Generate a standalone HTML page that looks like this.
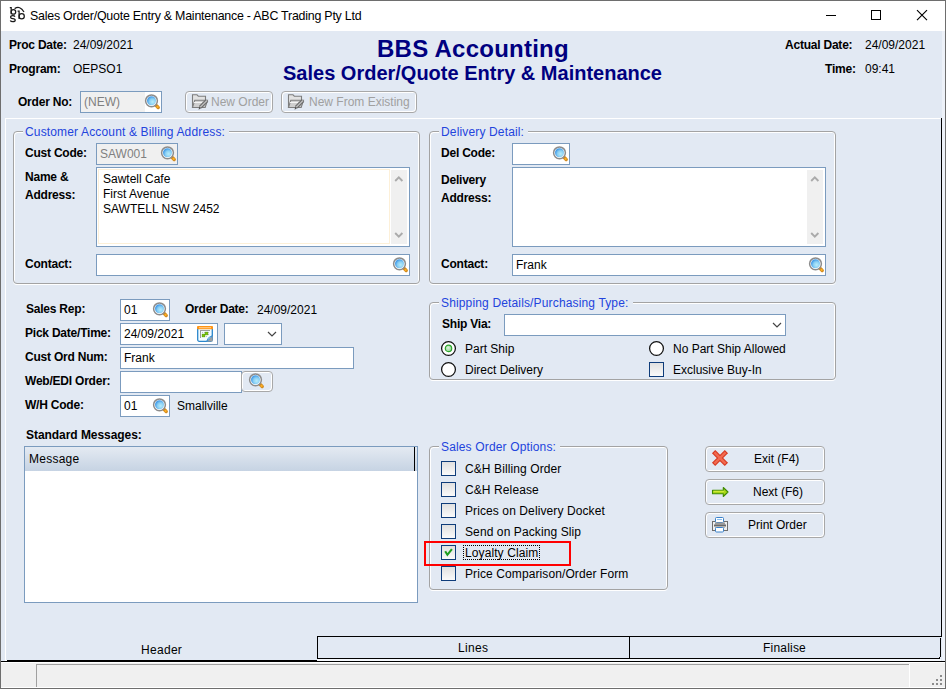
<!DOCTYPE html>
<html><head><meta charset="utf-8"><style>
html,body{margin:0;padding:0;width:946px;height:689px;overflow:hidden;background:#fff}
body{position:relative;font-family:"Liberation Sans",sans-serif;}
body>div{position:absolute}
.t{white-space:nowrap}
svg{overflow:visible}
</style></head><body>
<div style="left:0;top:0;width:946px;height:689px;background:#fff"></div>
<div class="t" style="left:30px;top:9px;font-size:12px;line-height:14px;font-weight:normal;color:#000;font-size:12.4px;letter-spacing:-0.22px">Sales Order/Quote Entry &amp; Maintenance - ABC Trading Pty Ltd</div>
<div style="left:1px;top:31px;width:944px;height:632px;background:#E2E9F3"></div>
<div style="left:826px;top:15px;width:10px;height:1px;background:#000"></div>
<div style="left:871px;top:10px;width:10px;height:10px;box-sizing:border-box;border:1px solid #000"></div>
<svg style="position:absolute;left:916px;top:9px" width="13" height="13" viewBox="0 0 13 13"><path d="M1 1.2 L11 11.2 M11 1.2 L1 11.2" stroke="#000" stroke-width="1.15"/></svg>
<div style="left:0px;top:0px;width:946px;height:1px;background:#6E6E6E"></div>
<div style="left:0px;top:0px;width:1px;height:689px;background:#6E6E6E"></div>
<div style="left:945px;top:0px;width:1px;height:689px;background:#6E6E6E"></div>
<div style="left:0px;top:688px;width:946px;height:1px;background:#6E6E6E"></div>
<div class="t" style="left:9px;top:38px;font-size:12px;line-height:14px;font-weight:bold;color:#000;letter-spacing:-0.22px;">Proc Date:</div>
<div class="t" style="left:73px;top:38px;font-size:12px;line-height:14px;font-weight:normal;color:#000;">24/09/2021</div>
<div class="t" style="left:9px;top:62px;font-size:12px;line-height:14px;font-weight:bold;color:#000;letter-spacing:-0.22px;">Program:</div>
<div class="t" style="left:73px;top:62px;font-size:12px;line-height:14px;font-weight:normal;color:#000;">OEPSO1</div>
<div class="t" style="left:377px;top:35px;font-size:24px;line-height:28px;font-weight:bold;color:#000080;letter-spacing:0.25px">BBS Accounting</div>
<div class="t" style="left:283px;top:61px;font-size:20px;line-height:24px;font-weight:bold;color:#000080;">Sales Order/Quote Entry &amp; Maintenance</div>
<div class="t" style="left:785px;top:38px;font-size:12px;line-height:14px;font-weight:bold;color:#000;letter-spacing:-0.22px;">Actual Date:</div>
<div class="t" style="left:865px;top:38px;font-size:12px;line-height:14px;font-weight:normal;color:#000;">24/09/2021</div>
<div class="t" style="left:825px;top:62px;font-size:12px;line-height:14px;font-weight:bold;color:#000;letter-spacing:-0.22px;">Time:</div>
<div class="t" style="left:865px;top:62px;font-size:12px;line-height:14px;font-weight:normal;color:#000;">09:41</div>
<div class="t" style="left:18px;top:95px;font-size:12px;line-height:14px;font-weight:bold;color:#000;letter-spacing:-0.22px;">Order No:</div>
<div style="left:80px;top:91px;width:82px;height:22px;box-sizing:border-box;border:1px solid #7B9BBE;background:#F0F0F0"></div>
<div style="left:145px;top:92px;width:16px;height:20px;background:#fff"></div>
<div class="t" style="left:84px;top:95px;font-size:12px;line-height:14px;font-weight:normal;color:#808080;">(NEW)</div>
<svg style="position:absolute;left:144px;top:93px" width="17" height="17" viewBox="0 0 17 17">
<defs><radialGradient id="mg144_93" cx="0.62" cy="0.62" r="0.62"><stop offset="0" stop-color="#B8ECFA"/><stop offset="0.55" stop-color="#8AD0F4"/><stop offset="1" stop-color="#3F98E6"/></radialGradient></defs>
<path d="M11.6 11.9 L14.2 14.5" stroke="#D08A20" stroke-width="3.4" stroke-linecap="round"/>
<circle cx="13.6" cy="13.9" r="1.1" fill="#FFB020"/>
<circle cx="7.5" cy="7.8" r="5.9" fill="#fff" stroke="#8C8C8C" stroke-width="1.5"/>
<circle cx="7.5" cy="7.8" r="4.5" fill="url(#mg144_93)"/>
</svg>
<div style="left:185px;top:91px;width:88px;height:22px;box-sizing:border-box;border:1px solid #A8A8A8;border-radius:4px;box-shadow:inset 1px 1px 0 #fff,inset -1px -1px 0 #fff;background:#E2E9F3"></div>
<svg style="position:absolute;left:192px;top:94px" width="17" height="17" viewBox="0 0 17 17">
<path d="M0.5 13.5 V0.8 H5 L6.3 2.2 H13.5 V6" fill="#E2E2E2" stroke="#7E7E7E" stroke-width="1.1"/>
<path d="M0.5 13.5 L2.8 6.2 H15.5 L13.2 13.5 Z" fill="#CFCFCF" stroke="#7E7E7E" stroke-width="1.1"/>
<path d="M2 8.5 H10" stroke="#F4F4F4" stroke-width="1"/>
<path d="M15 6.5 L8.2 13.3" stroke="#6A6A6A" stroke-width="3.6"/>
<path d="M15 6.5 L8.2 13.3" stroke="#BDBDBD" stroke-width="1.4"/>
<path d="M7.2 12.5 L9 14.3 L6.6 15.8 Z" fill="#555"/>
</svg>
<div class="t" style="left:211px;top:95px;font-size:12px;line-height:14px;font-weight:normal;color:#A0A0A0;">New Order</div>
<div style="left:281px;top:91px;width:136px;height:22px;box-sizing:border-box;border:1px solid #A8A8A8;border-radius:4px;box-shadow:inset 1px 1px 0 #fff,inset -1px -1px 0 #fff;background:#E2E9F3"></div>
<svg style="position:absolute;left:288px;top:94px" width="17" height="17" viewBox="0 0 17 17">
<path d="M0.5 13.5 V0.8 H5 L6.3 2.2 H13.5 V6" fill="#E2E2E2" stroke="#7E7E7E" stroke-width="1.1"/>
<path d="M0.5 13.5 L2.8 6.2 H15.5 L13.2 13.5 Z" fill="#CFCFCF" stroke="#7E7E7E" stroke-width="1.1"/>
<path d="M2 8.5 H10" stroke="#F4F4F4" stroke-width="1"/>
<path d="M15 6.5 L8.2 13.3" stroke="#6A6A6A" stroke-width="3.6"/>
<path d="M15 6.5 L8.2 13.3" stroke="#BDBDBD" stroke-width="1.4"/>
<path d="M7.2 12.5 L9 14.3 L6.6 15.8 Z" fill="#555"/>
</svg>
<div class="t" style="left:309px;top:95px;font-size:12px;line-height:14px;font-weight:normal;color:#A0A0A0;">New From Existing</div>
<div style="left:5px;top:118px;width:936px;height:1px;background:#fff"></div>
<div style="left:5px;top:118px;width:1px;height:542px;background:#fff"></div>
<div style="left:941px;top:118px;width:1px;height:519px;background:#000"></div>
<div style="left:942px;top:31px;width:3px;height:630px;background:#EDF1F8"></div>
<div style="left:13px;top:131px;width:407px;height:153px;box-sizing:border-box;border:1px solid #A3A3A3;border-radius:4px;box-shadow:inset 1px 1px 0 #fff, inset -1px 0 0 #fff, 0 1px 0 #fff"></div>
<div class="t" style="left:23px;top:125px;padding:0 4px 0 2px;font-size:12px;line-height:14px;height:14px;color:#2244DD;background:#E2E9F3;letter-spacing:0.15px">Customer Account &amp; Billing Address:</div>
<div class="t" style="left:25px;top:146px;font-size:12px;line-height:14px;font-weight:bold;color:#000;letter-spacing:-0.22px;">Cust Code:</div>
<div style="left:96px;top:143px;width:82px;height:22px;box-sizing:border-box;border:1px solid #7B9BBE;background:#F0F0F0"></div>
<div class="t" style="left:100px;top:147px;font-size:12px;line-height:14px;font-weight:normal;color:#808080;">SAW001</div>
<svg style="position:absolute;left:160px;top:145px" width="17" height="17" viewBox="0 0 17 17">
<defs><radialGradient id="mg160_145" cx="0.62" cy="0.62" r="0.62"><stop offset="0" stop-color="#B8ECFA"/><stop offset="0.55" stop-color="#8AD0F4"/><stop offset="1" stop-color="#3F98E6"/></radialGradient></defs>
<path d="M11.6 11.9 L14.2 14.5" stroke="#D08A20" stroke-width="3.4" stroke-linecap="round"/>
<circle cx="13.6" cy="13.9" r="1.1" fill="#FFB020"/>
<circle cx="7.5" cy="7.8" r="5.9" fill="#fff" stroke="#8C8C8C" stroke-width="1.5"/>
<circle cx="7.5" cy="7.8" r="4.5" fill="url(#mg160_145)"/>
</svg>
<div class="t" style="left:25px;top:170px;font-size:12px;line-height:14px;font-weight:bold;color:#000;letter-spacing:-0.22px;">Name &amp;</div>
<div class="t" style="left:25px;top:188px;font-size:12px;line-height:14px;font-weight:bold;color:#000;letter-spacing:-0.22px;">Address:</div>
<div style="left:96px;top:167px;width:314px;height:80px;box-sizing:border-box;border:1px solid #7B9BBE;background:#FFFFFF"></div>
<div style="left:98px;top:169px;width:292px;height:75px;box-sizing:border-box;border:1px solid #FDF0D8"></div>
<div style="left:391px;top:170px;width:16px;height:74px;background:#F0F0F0"></div>
<svg style="position:absolute;left:391px;top:170px" width="16" height="74" viewBox="0 0 16 74"><path d="M4.2 11 L7.8 7.3 L11.4 11" fill="none" stroke="#ABABAB" stroke-width="1.9"/><path d="M4.2 63 L7.8 66.7 L11.4 63" fill="none" stroke="#ABABAB" stroke-width="1.9"/></svg>
<div class="t" style="left:103px;top:172px;font-size:12px;line-height:14px;font-weight:normal;color:#000;">Sawtell Cafe</div>
<div class="t" style="left:103px;top:187px;font-size:12px;line-height:14px;font-weight:normal;color:#000;">First Avenue</div>
<div class="t" style="left:103px;top:202px;font-size:12px;line-height:14px;font-weight:normal;color:#000;">SAWTELL NSW 2452</div>
<div class="t" style="left:25px;top:257px;font-size:12px;line-height:14px;font-weight:bold;color:#000;letter-spacing:-0.22px;">Contact:</div>
<div style="left:96px;top:254px;width:314px;height:22px;box-sizing:border-box;border:1px solid #7B9BBE;background:#FFFFFF"></div>
<svg style="position:absolute;left:392px;top:256px" width="17" height="17" viewBox="0 0 17 17">
<defs><radialGradient id="mg392_256" cx="0.62" cy="0.62" r="0.62"><stop offset="0" stop-color="#B8ECFA"/><stop offset="0.55" stop-color="#8AD0F4"/><stop offset="1" stop-color="#3F98E6"/></radialGradient></defs>
<path d="M11.6 11.9 L14.2 14.5" stroke="#D08A20" stroke-width="3.4" stroke-linecap="round"/>
<circle cx="13.6" cy="13.9" r="1.1" fill="#FFB020"/>
<circle cx="7.5" cy="7.8" r="5.9" fill="#fff" stroke="#8C8C8C" stroke-width="1.5"/>
<circle cx="7.5" cy="7.8" r="4.5" fill="url(#mg392_256)"/>
</svg>
<div style="left:429px;top:131px;width:407px;height:153px;box-sizing:border-box;border:1px solid #A3A3A3;border-radius:4px;box-shadow:inset 1px 1px 0 #fff, inset -1px 0 0 #fff, 0 1px 0 #fff"></div>
<div class="t" style="left:439px;top:125px;padding:0 4px 0 2px;font-size:12px;line-height:14px;height:14px;color:#2244DD;background:#E2E9F3;letter-spacing:0.15px">Delivery Detail:</div>
<div class="t" style="left:441px;top:146px;font-size:12px;line-height:14px;font-weight:bold;color:#000;letter-spacing:-0.22px;">Del Code:</div>
<div style="left:512px;top:143px;width:58px;height:22px;box-sizing:border-box;border:1px solid #7B9BBE;background:#FFFFFF"></div>
<svg style="position:absolute;left:552px;top:145px" width="17" height="17" viewBox="0 0 17 17">
<defs><radialGradient id="mg552_145" cx="0.62" cy="0.62" r="0.62"><stop offset="0" stop-color="#B8ECFA"/><stop offset="0.55" stop-color="#8AD0F4"/><stop offset="1" stop-color="#3F98E6"/></radialGradient></defs>
<path d="M11.6 11.9 L14.2 14.5" stroke="#D08A20" stroke-width="3.4" stroke-linecap="round"/>
<circle cx="13.6" cy="13.9" r="1.1" fill="#FFB020"/>
<circle cx="7.5" cy="7.8" r="5.9" fill="#fff" stroke="#8C8C8C" stroke-width="1.5"/>
<circle cx="7.5" cy="7.8" r="4.5" fill="url(#mg552_145)"/>
</svg>
<div class="t" style="left:441px;top:173px;font-size:12px;line-height:14px;font-weight:bold;color:#000;letter-spacing:-0.22px;">Delivery</div>
<div class="t" style="left:441px;top:191px;font-size:12px;line-height:14px;font-weight:bold;color:#000;letter-spacing:-0.22px;">Address:</div>
<div style="left:512px;top:167px;width:314px;height:80px;box-sizing:border-box;border:1px solid #7B9BBE;background:#FFFFFF"></div>
<div style="left:807px;top:170px;width:16px;height:74px;background:#F0F0F0"></div>
<svg style="position:absolute;left:807px;top:170px" width="16" height="74" viewBox="0 0 16 74"><path d="M4.2 11 L7.8 7.3 L11.4 11" fill="none" stroke="#ABABAB" stroke-width="1.9"/><path d="M4.2 63 L7.8 66.7 L11.4 63" fill="none" stroke="#ABABAB" stroke-width="1.9"/></svg>
<div class="t" style="left:441px;top:257px;font-size:12px;line-height:14px;font-weight:bold;color:#000;letter-spacing:-0.22px;">Contact:</div>
<div style="left:512px;top:254px;width:314px;height:22px;box-sizing:border-box;border:1px solid #7B9BBE;background:#FFFFFF"></div>
<div class="t" style="left:516px;top:258px;font-size:12px;line-height:14px;font-weight:normal;color:#000;">Frank</div>
<svg style="position:absolute;left:808px;top:256px" width="17" height="17" viewBox="0 0 17 17">
<defs><radialGradient id="mg808_256" cx="0.62" cy="0.62" r="0.62"><stop offset="0" stop-color="#B8ECFA"/><stop offset="0.55" stop-color="#8AD0F4"/><stop offset="1" stop-color="#3F98E6"/></radialGradient></defs>
<path d="M11.6 11.9 L14.2 14.5" stroke="#D08A20" stroke-width="3.4" stroke-linecap="round"/>
<circle cx="13.6" cy="13.9" r="1.1" fill="#FFB020"/>
<circle cx="7.5" cy="7.8" r="5.9" fill="#fff" stroke="#8C8C8C" stroke-width="1.5"/>
<circle cx="7.5" cy="7.8" r="4.5" fill="url(#mg808_256)"/>
</svg>
<div class="t" style="left:26px;top:302px;font-size:12px;line-height:14px;font-weight:bold;color:#000;letter-spacing:-0.22px;">Sales Rep:</div>
<div style="left:120px;top:299px;width:50px;height:22px;box-sizing:border-box;border:1px solid #7B9BBE;background:#FFFFFF"></div>
<div class="t" style="left:124px;top:303px;font-size:12px;line-height:14px;font-weight:normal;color:#000;">01</div>
<svg style="position:absolute;left:152px;top:301px" width="17" height="17" viewBox="0 0 17 17">
<defs><radialGradient id="mg152_301" cx="0.62" cy="0.62" r="0.62"><stop offset="0" stop-color="#B8ECFA"/><stop offset="0.55" stop-color="#8AD0F4"/><stop offset="1" stop-color="#3F98E6"/></radialGradient></defs>
<path d="M11.6 11.9 L14.2 14.5" stroke="#D08A20" stroke-width="3.4" stroke-linecap="round"/>
<circle cx="13.6" cy="13.9" r="1.1" fill="#FFB020"/>
<circle cx="7.5" cy="7.8" r="5.9" fill="#fff" stroke="#8C8C8C" stroke-width="1.5"/>
<circle cx="7.5" cy="7.8" r="4.5" fill="url(#mg152_301)"/>
</svg>
<div class="t" style="left:185px;top:302px;font-size:12px;line-height:14px;font-weight:bold;color:#000;letter-spacing:-0.22px;">Order Date:</div>
<div class="t" style="left:257px;top:303px;font-size:12px;line-height:14px;font-weight:normal;color:#000;">24/09/2021</div>
<div class="t" style="left:25px;top:326px;font-size:12px;line-height:14px;font-weight:bold;color:#000;letter-spacing:-0.22px;">Pick Date/Time:</div>
<div style="left:120px;top:323px;width:98px;height:22px;box-sizing:border-box;border:1px solid #7B9BBE;background:#FFFFFF"></div>
<div class="t" style="left:124px;top:327px;font-size:12px;line-height:14px;font-weight:normal;color:#000;">24/09/2021</div>
<svg style="position:absolute;left:197px;top:326px" width="16" height="16" viewBox="0 0 16 16">
<rect x="0.7" y="1" width="14.6" height="14.3" rx="1.5" fill="#F4FCFF" stroke="#2A86CC" stroke-width="1.3"/>
<rect x="0" y="0" width="16" height="3.2" rx="1" fill="#FF9414"/>
<rect x="2" y="1.3" width="12" height="0.9" fill="#FFD9A8"/>
<rect x="3" y="4" width="10" height="1" fill="#9C9C9C"/>
<rect x="3" y="4" width="1" height="8" fill="#9C9C9C"/>
<g fill="#BDBDC8"><rect x="5" y="6" width="1" height="1"/><rect x="7" y="6" width="1" height="1"/><rect x="9" y="6" width="1" height="1"/><rect x="11" y="6" width="1" height="1"/><rect x="5" y="8" width="1" height="1"/><rect x="7" y="8" width="1" height="1"/><rect x="11" y="8" width="1" height="1"/><rect x="5" y="10" width="1" height="1"/><rect x="7" y="10" width="1" height="1"/><rect x="9" y="10" width="1" height="1"/></g>
<rect x="5.2" y="8.2" width="2.6" height="2.6" fill="#7CC800" stroke="#58A000" stroke-width="0.7"/>
<rect x="8.2" y="6.2" width="2.6" height="2.6" fill="#7CC800" stroke="#58A000" stroke-width="0.7"/>
<path d="M9.5 15.5 L15.5 9.5 V15.5 Z" fill="#A0A0A0"/>
<path d="M9.5 15.5 Q10.5 11 15.5 9.5 L13 12.5 Z" fill="#fff" stroke="#2A86CC" stroke-width="0.9"/>
</svg>
<div style="left:224px;top:323px;width:58px;height:22px;box-sizing:border-box;border:1px solid #7B9BBE;background:#FFFFFF"></div>
<svg style="position:absolute;left:267px;top:331px" width="10" height="7" viewBox="0 0 10 7"><path d="M1 1 L5 5 L9 1" fill="none" stroke="#444" stroke-width="1.2"/></svg>
<div class="t" style="left:25px;top:350px;font-size:12px;line-height:14px;font-weight:bold;color:#000;letter-spacing:-0.22px;">Cust Ord Num:</div>
<div style="left:120px;top:347px;width:234px;height:22px;box-sizing:border-box;border:1px solid #7B9BBE;background:#FFFFFF"></div>
<div class="t" style="left:124px;top:351px;font-size:12px;line-height:14px;font-weight:normal;color:#000;">Frank</div>
<div class="t" style="left:25px;top:374px;font-size:12px;line-height:14px;font-weight:bold;color:#000;letter-spacing:-0.22px;">Web/EDI Order:</div>
<div style="left:120px;top:371px;width:122px;height:22px;box-sizing:border-box;border:1px solid #7B9BBE;background:#FFFFFF"></div>
<div style="left:241px;top:371px;width:32px;height:21px;box-sizing:border-box;border:1px solid #A8A8A8;border-radius:4px;box-shadow:inset 1px 1px 0 #fff,inset -1px -1px 0 #fff;background:#E2E9F3"></div>
<svg style="position:absolute;left:248px;top:372px" width="17" height="17" viewBox="0 0 17 17">
<defs><radialGradient id="mg248_372" cx="0.62" cy="0.62" r="0.62"><stop offset="0" stop-color="#B8ECFA"/><stop offset="0.55" stop-color="#8AD0F4"/><stop offset="1" stop-color="#3F98E6"/></radialGradient></defs>
<path d="M11.6 11.9 L14.2 14.5" stroke="#D08A20" stroke-width="3.4" stroke-linecap="round"/>
<circle cx="13.6" cy="13.9" r="1.1" fill="#FFB020"/>
<circle cx="7.5" cy="7.8" r="5.9" fill="#fff" stroke="#8C8C8C" stroke-width="1.5"/>
<circle cx="7.5" cy="7.8" r="4.5" fill="url(#mg248_372)"/>
</svg>
<div class="t" style="left:25px;top:398px;font-size:12px;line-height:14px;font-weight:bold;color:#000;letter-spacing:-0.22px;">W/H Code:</div>
<div style="left:120px;top:395px;width:50px;height:22px;box-sizing:border-box;border:1px solid #7B9BBE;background:#FFFFFF"></div>
<div class="t" style="left:124px;top:399px;font-size:12px;line-height:14px;font-weight:normal;color:#000;">01</div>
<svg style="position:absolute;left:152px;top:397px" width="17" height="17" viewBox="0 0 17 17">
<defs><radialGradient id="mg152_397" cx="0.62" cy="0.62" r="0.62"><stop offset="0" stop-color="#B8ECFA"/><stop offset="0.55" stop-color="#8AD0F4"/><stop offset="1" stop-color="#3F98E6"/></radialGradient></defs>
<path d="M11.6 11.9 L14.2 14.5" stroke="#D08A20" stroke-width="3.4" stroke-linecap="round"/>
<circle cx="13.6" cy="13.9" r="1.1" fill="#FFB020"/>
<circle cx="7.5" cy="7.8" r="5.9" fill="#fff" stroke="#8C8C8C" stroke-width="1.5"/>
<circle cx="7.5" cy="7.8" r="4.5" fill="url(#mg152_397)"/>
</svg>
<div class="t" style="left:177px;top:399px;font-size:12px;line-height:14px;font-weight:normal;color:#000;">Smallville</div>
<div class="t" style="left:26px;top:428px;font-size:12px;line-height:14px;font-weight:bold;color:#000;letter-spacing:-0.05px">Standard Messages:</div>
<div style="left:24px;top:446px;width:394px;height:157px;box-sizing:border-box;border:1px solid #7B9BBE;background:#FFFFFF"></div>
<div style="left:25px;top:447px;width:392px;height:24px;background:linear-gradient(#E4EAF2,#C6D3E3)"></div>
<div style="left:414px;top:447px;width:1px;height:24px;background:#000"></div>
<div class="t" style="left:29px;top:452px;font-size:12px;line-height:14px;font-weight:normal;color:#000;letter-spacing:0.25px">Message</div>
<div style="left:429px;top:302px;width:407px;height:78px;box-sizing:border-box;border:1px solid #A3A3A3;border-radius:4px;box-shadow:inset 1px 1px 0 #fff, inset -1px 0 0 #fff, 0 1px 0 #fff"></div>
<div class="t" style="left:439px;top:296px;padding:0 4px 0 2px;font-size:12px;line-height:14px;height:14px;color:#2244DD;background:#E2E9F3;letter-spacing:0.15px">Shipping Details/Purchasing Type:</div>
<div class="t" style="left:442px;top:317px;font-size:12px;line-height:14px;font-weight:bold;color:#000;letter-spacing:-0.22px;">Ship Via:</div>
<div style="left:504px;top:314px;width:282px;height:22px;box-sizing:border-box;border:1px solid #7B9BBE;background:#FFFFFF"></div>
<svg style="position:absolute;left:772px;top:322px" width="10" height="7" viewBox="0 0 10 7"><path d="M1 1 L5 5 L9 1" fill="none" stroke="#444" stroke-width="1.2"/></svg>
<svg style="position:absolute;left:440px;top:340px" width="17" height="17" viewBox="0 0 17 17"><circle cx="8.5" cy="8.5" r="6.9" fill="#fff" stroke="#111" stroke-width="1.25"/><defs><radialGradient id="rg" cx="0.45" cy="0.4" r="0.6"><stop offset="0" stop-color="#E0F4E0"/><stop offset="1" stop-color="#8ED08E"/></radialGradient></defs><circle cx="8.5" cy="8.4" r="3.2" fill="url(#rg)" stroke="#2CA82C" stroke-width="1.2"/></svg>
<div class="t" style="left:465px;top:342px;font-size:12px;line-height:14px;font-weight:normal;color:#000;">Part Ship</div>
<svg style="position:absolute;left:440px;top:361px" width="17" height="17" viewBox="0 0 17 17"><circle cx="8.5" cy="8.5" r="6.9" fill="#fff" stroke="#111" stroke-width="1.25"/></svg>
<div class="t" style="left:465px;top:363px;font-size:12px;line-height:14px;font-weight:normal;color:#000;">Direct Delivery</div>
<svg style="position:absolute;left:648px;top:340px" width="17" height="17" viewBox="0 0 17 17"><circle cx="8.5" cy="8.5" r="6.9" fill="#fff" stroke="#111" stroke-width="1.25"/></svg>
<div class="t" style="left:673px;top:342px;font-size:12px;line-height:14px;font-weight:normal;color:#000;">No Part Ship Allowed</div>
<div style="left:649px;top:362px;width:15px;height:15px;box-sizing:border-box;border:1px solid #0E3C7A;background:linear-gradient(#E0E0E0,#FAFAFA)"></div>
<div class="t" style="left:673px;top:363px;font-size:12px;line-height:14px;font-weight:normal;color:#000;">Exclusive Buy-In</div>
<div style="left:429px;top:446px;width:239px;height:144px;box-sizing:border-box;border:1px solid #A3A3A3;border-radius:4px;box-shadow:inset 1px 1px 0 #fff, inset -1px 0 0 #fff, 0 1px 0 #fff"></div>
<div class="t" style="left:439px;top:440px;padding:0 4px 0 2px;font-size:12px;line-height:14px;height:14px;color:#2244DD;background:#E2E9F3;letter-spacing:0.15px">Sales Order Options:</div>
<div style="left:441px;top:461px;width:15px;height:15px;box-sizing:border-box;border:1px solid #0E3C7A;background:linear-gradient(#E0E0E0,#FAFAFA)"></div>
<div class="t" style="left:465px;top:462px;font-size:12px;line-height:14px;font-weight:normal;color:#000;letter-spacing:0.1px">C&amp;H Billing Order</div>
<div style="left:441px;top:482px;width:15px;height:15px;box-sizing:border-box;border:1px solid #0E3C7A;background:linear-gradient(#E0E0E0,#FAFAFA)"></div>
<div class="t" style="left:465px;top:483px;font-size:12px;line-height:14px;font-weight:normal;color:#000;letter-spacing:0.1px">C&amp;H Release</div>
<div style="left:441px;top:503px;width:15px;height:15px;box-sizing:border-box;border:1px solid #0E3C7A;background:linear-gradient(#E0E0E0,#FAFAFA)"></div>
<div class="t" style="left:465px;top:504px;font-size:12px;line-height:14px;font-weight:normal;color:#000;letter-spacing:0.1px">Prices on Delivery Docket</div>
<div style="left:441px;top:524px;width:15px;height:15px;box-sizing:border-box;border:1px solid #0E3C7A;background:linear-gradient(#E0E0E0,#FAFAFA)"></div>
<div class="t" style="left:465px;top:525px;font-size:12px;line-height:14px;font-weight:normal;color:#000;letter-spacing:0.1px">Send on Packing Slip</div>
<div style="left:441px;top:545px;width:15px;height:15px;box-sizing:border-box;border:1px solid #0E3C7A;background:linear-gradient(#E0E0E0,#FAFAFA)"></div>
<svg style="position:absolute;left:441px;top:545px" width="15" height="15" viewBox="0 0 15 15"><path d="M4.2 6.3 L6.4 9.8 L10.9 4.2" fill="none" stroke="#1E9E1E" stroke-width="2.1"/></svg>
<div class="t" style="left:465px;top:546px;font-size:12px;line-height:14px;font-weight:normal;color:#000;letter-spacing:0.1px">Loyalty Claim</div>
<div style="left:441px;top:566px;width:15px;height:15px;box-sizing:border-box;border:1px solid #0E3C7A;background:linear-gradient(#E0E0E0,#FAFAFA)"></div>
<div class="t" style="left:465px;top:567px;font-size:12px;line-height:14px;font-weight:normal;color:#000;letter-spacing:0.1px">Price Comparison/Order Form</div>
<div style="left:463px;top:545px;width:77px;height:15px;box-sizing:border-box;border:1px dotted #000"></div>
<div style="left:424px;top:541px;width:147px;height:25px;box-sizing:border-box;border:2px solid #F00"></div>
<div style="left:705px;top:446px;width:120px;height:26px;box-sizing:border-box;border:1px solid #A8A8A8;border-radius:4px;box-shadow:inset 1px 1px 0 #fff,inset -1px -1px 0 #fff;background:#E2E9F3"></div>
<div class="t" style="left:754px;top:452px;font-size:12px;line-height:14px;font-weight:normal;color:#000;">Exit (F4)</div>
<div style="left:705px;top:479px;width:120px;height:26px;box-sizing:border-box;border:1px solid #A8A8A8;border-radius:4px;box-shadow:inset 1px 1px 0 #fff,inset -1px -1px 0 #fff;background:#E2E9F3"></div>
<div class="t" style="left:753px;top:485px;font-size:12px;line-height:14px;font-weight:normal;color:#000;">Next (F6)</div>
<div style="left:705px;top:512px;width:120px;height:26px;box-sizing:border-box;border:1px solid #A8A8A8;border-radius:4px;box-shadow:inset 1px 1px 0 #fff,inset -1px -1px 0 #fff;background:#E2E9F3"></div>
<div class="t" style="left:748px;top:518px;font-size:12px;line-height:14px;font-weight:normal;color:#000;">Print Order</div>
<svg style="position:absolute;left:712px;top:450px" width="16" height="16" viewBox="0 0 16 16">
<path d="M3.2 3.2 L12.8 12.8 M12.8 3.2 L3.2 12.8" stroke="#D63A22" stroke-width="4.6" stroke-linecap="square"/>
<path d="M3.2 3.2 L12.8 12.8 M12.8 3.2 L3.2 12.8" stroke="#F26A50" stroke-width="2.4" stroke-linecap="square"/>
</svg>
<svg style="position:absolute;left:711px;top:486px" width="18" height="12" viewBox="0 0 18 12">
<path d="M1.5 4.2 H12.3 V1.5 L17 6 L12.3 10.5 V7.8 H1.5 Z" fill="#A8D818" stroke="#3F8A00" stroke-width="1.1" stroke-linejoin="round"/>
<path d="M2.5 5.3 H13" stroke="#D8F040" stroke-width="1"/>
</svg>
<svg style="position:absolute;left:712px;top:517px" width="17" height="17" viewBox="0 0 17 17">
<rect x="0.5" y="4.5" width="15" height="9" fill="#F0F0F0" stroke="#6E6E6E"/>
<rect x="3.5" y="0.5" width="8" height="5" rx="1" fill="#fff" stroke="#3A82CA"/>
<rect x="5" y="2" width="5" height="1" fill="#8CC0F0"/>
<rect x="3" y="5.5" width="10" height="2" fill="#9A9A9A"/>
<rect x="2" y="7.5" width="12" height="2" fill="#6A6A6A"/>
<rect x="3" y="9.5" width="10" height="1.5" fill="#B8B8B8"/>
<rect x="3.5" y="10.5" width="8" height="4.5" rx="1" fill="#fff" stroke="#3A82CA"/>
</svg>
<div style="left:5px;top:660px;width:2px;height:1px;background:#fff"></div>
<div style="left:7px;top:660px;width:310px;height:1px;background:#000"></div>
<div style="left:1px;top:661px;width:944px;height:1px;background:#000"></div>
<div style="left:1px;top:662px;width:944px;height:1px;background:#fff"></div>
<div style="left:317px;top:636px;width:624px;height:1px;background:#000"></div>
<div style="left:317px;top:636px;width:1px;height:23px;background:#000"></div>
<div style="left:629px;top:636px;width:1px;height:23px;background:#000"></div>
<div style="left:940px;top:638px;width:1px;height:19px;background:#000"></div>
<div style="left:939px;top:657px;width:1px;height:1px;background:#000"></div>
<div style="left:318px;top:658px;width:622px;height:1px;background:#000"></div>
<div style="left:317px;top:659px;width:624px;height:2px;background:#F4F7FB"></div>
<div class="t" style="left:141px;top:643px;font-size:12px;line-height:14px;font-weight:normal;color:#000;letter-spacing:0.3px">Header</div>
<div class="t" style="left:458px;top:641px;font-size:12px;line-height:14px;font-weight:normal;color:#000;letter-spacing:0.3px">Lines</div>
<div class="t" style="left:763px;top:641px;font-size:12px;line-height:14px;font-weight:normal;color:#000;letter-spacing:0.2px">Finalise</div>
<div style="left:1px;top:663px;width:944px;height:25px;background:#F0F0F0"></div>
<div style="left:36px;top:664px;width:873px;height:1px;background:#A0A0A0"></div>
<div style="left:36px;top:664px;width:1px;height:23px;background:#A0A0A0"></div>
<div style="left:909px;top:664px;width:1px;height:23px;background:#fff"></div>
<div style="left:1px;top:687px;width:944px;height:1px;background:#fff"></div>
<div style="left:940px;top:675px;width:2px;height:2px;background:#8C8C8C"></div>
<div style="left:936px;top:679px;width:2px;height:2px;background:#8C8C8C"></div>
<div style="left:940px;top:679px;width:2px;height:2px;background:#8C8C8C"></div>
<div style="left:932px;top:683px;width:2px;height:2px;background:#8C8C8C"></div>
<div style="left:936px;top:683px;width:2px;height:2px;background:#8C8C8C"></div>
<div style="left:940px;top:683px;width:2px;height:2px;background:#8C8C8C"></div>
<svg style="position:absolute;left:0px;top:0px" width="30" height="30" viewBox="0 0 30 30">
<g fill="none" stroke="#1A1A1A" stroke-width="1.25">
<path d="M9.8 7.6 H11.2 V14.2"/><ellipse cx="13.4" cy="11.9" rx="2.3" ry="2.2"/>
<path d="M15 16.6 Q14.5 15.6 12.7 15.6 Q10.6 15.6 10.6 17.2 Q10.6 18.5 12.8 18.6 Q15.2 18.8 15.2 20.2 Q15.2 21.6 12.8 21.6 Q10.8 21.6 10.3 20.4"/>
<path d="M17.6 11.2 H19.1 V19"/><ellipse cx="21.7" cy="16.2" rx="2.6" ry="2.7"/>
<path d="M14.6 8.6 Q20 5.2 24 12"/>
</g>
</svg>
<div style="left:0px;top:0px;width:946px;height:1px;background:#6E6E6E"></div>
<div style="left:0px;top:0px;width:1px;height:689px;background:#6E6E6E"></div>
<div style="left:945px;top:0px;width:1px;height:689px;background:#6E6E6E"></div>
<div style="left:0px;top:688px;width:946px;height:1px;background:#6E6E6E"></div>
</body></html>
